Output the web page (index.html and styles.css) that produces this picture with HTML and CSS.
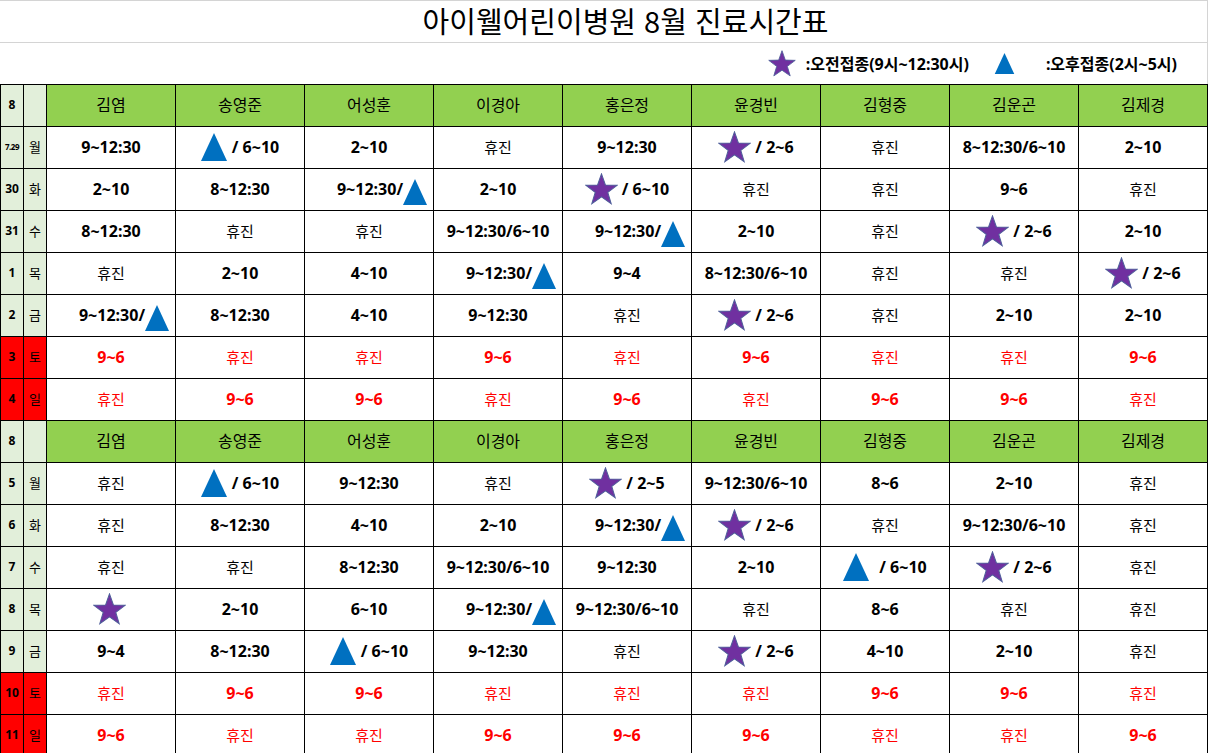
FILE: index.html
```html
<!DOCTYPE html>
<html lang="ko">
<head>
<meta charset="utf-8">
<title>아이웰어린이병원 8월 진료시간표</title>
<link rel="stylesheet" href="styles.css">
</head>
<body>
<svg class="defs" width="0" height="0" aria-hidden="true">
  <defs>
    <symbol id="star" viewBox="0 0 32 31">
      <polygon points="16,0.8 19.8,11.6 31.2,11.9 22.1,18.8 25.4,29.7 16,23.2 6.6,29.7 9.9,18.8 0.8,11.9 12.2,11.6" fill="#7030a0" stroke="#4f5f9a" stroke-width="1"/>
    </symbol>
    <symbol id="tri" viewBox="0 0 26 28">
      <polygon points="13,0 26,28 0,28" fill="#0070c0"/>
    </symbol>
  </defs>
</svg>
<div class="page">
  <div class="title">아이웰어린이병원 8월 진료시간표</div>
  <div class="legend">
    <svg class="lg-star"><use href="#star"/></svg>
    <span class="lg-text">:오전접종(9시~12:30시)</span>
    <svg class="lg-tri"><use href="#tri"/></svg>
    <span class="lg-text">:오후접종(2시~5시)</span>
  </div>
  <table class="sched">
    <colgroup>
      <col class="c-date"><col class="c-day">
      <col class="c-doc"><col class="c-doc"><col class="c-doc"><col class="c-doc"><col class="c-doc"><col class="c-doc"><col class="c-doc"><col class="c-doc"><col class="c-doc">
    </colgroup>
    <tbody>
      <tr class="head">
        <td class="date">8</td><td class="day"></td>
        <td>김염</td><td>송영준</td><td>어성훈</td><td>이경아</td><td>홍은정</td><td>윤경빈</td><td>김형중</td><td>김운곤</td><td>김제경</td>
      </tr>
      <tr>
        <td class="date tiny">7.29</td><td class="day">월</td>
        <td>9~12:30</td>
        <td><span class="ic"><svg class="tri"><use href="#tri"/></svg><span>/ 6~10</span></span></td>
        <td>2~10</td>
        <td class="off">휴진</td>
        <td>9~12:30</td>
        <td><span class="ic"><svg class="star"><use href="#star"/></svg><span>/ 2~6</span></span></td>
        <td class="off">휴진</td>
        <td>8~12:30/6~10</td>
        <td>2~10</td>
      </tr>
      <tr>
        <td class="date">30</td><td class="day">화</td>
        <td>2~10</td>
        <td>8~12:30</td>
        <td><span class="ic after"><span>9~12:30/</span><svg class="tri2"><use href="#tri"/></svg></span></td>
        <td>2~10</td>
        <td><span class="ic"><svg class="star"><use href="#star"/></svg><span>/ 6~10</span></span></td>
        <td class="off">휴진</td>
        <td class="off">휴진</td>
        <td>9~6</td>
        <td class="off">휴진</td>
      </tr>
      <tr>
        <td class="date">31</td><td class="day">수</td>
        <td>8~12:30</td>
        <td class="off">휴진</td>
        <td class="off">휴진</td>
        <td>9~12:30/6~10</td>
        <td><span class="ic after"><span>9~12:30/</span><svg class="tri2"><use href="#tri"/></svg></span></td>
        <td>2~10</td>
        <td class="off">휴진</td>
        <td><span class="ic"><svg class="star"><use href="#star"/></svg><span>/ 2~6</span></span></td>
        <td>2~10</td>
      </tr>
      <tr>
        <td class="date">1</td><td class="day">목</td>
        <td class="off">휴진</td>
        <td>2~10</td>
        <td>4~10</td>
        <td><span class="ic after"><span>9~12:30/</span><svg class="tri2"><use href="#tri"/></svg></span></td>
        <td>9~4</td>
        <td>8~12:30/6~10</td>
        <td class="off">휴진</td>
        <td class="off">휴진</td>
        <td><span class="ic"><svg class="star"><use href="#star"/></svg><span>/ 2~6</span></span></td>
      </tr>
      <tr>
        <td class="date">2</td><td class="day">금</td>
        <td><span class="ic after"><span>9~12:30/</span><svg class="tri2"><use href="#tri"/></svg></span></td>
        <td>8~12:30</td>
        <td>4~10</td>
        <td>9~12:30</td>
        <td class="off">휴진</td>
        <td><span class="ic"><svg class="star"><use href="#star"/></svg><span>/ 2~6</span></span></td>
        <td class="off">휴진</td>
        <td>2~10</td>
        <td>2~10</td>
      </tr>
      <tr class="we">
        <td class="date">3</td><td class="day">토</td>
        <td>9~6</td><td class="off">휴진</td><td class="off">휴진</td><td>9~6</td><td class="off">휴진</td><td>9~6</td><td class="off">휴진</td><td class="off">휴진</td><td>9~6</td>
      </tr>
      <tr class="we">
        <td class="date">4</td><td class="day">일</td>
        <td class="off">휴진</td><td>9~6</td><td>9~6</td><td class="off">휴진</td><td>9~6</td><td class="off">휴진</td><td>9~6</td><td>9~6</td><td class="off">휴진</td>
      </tr>
      <tr class="head">
        <td class="date">8</td><td class="day"></td>
        <td>김염</td><td>송영준</td><td>어성훈</td><td>이경아</td><td>홍은정</td><td>윤경빈</td><td>김형중</td><td>김운곤</td><td>김제경</td>
      </tr>
      <tr>
        <td class="date">5</td><td class="day">월</td>
        <td class="off">휴진</td>
        <td><span class="ic"><svg class="tri"><use href="#tri"/></svg><span>/ 6~10</span></span></td>
        <td>9~12:30</td>
        <td class="off">휴진</td>
        <td><span class="ic"><svg class="star"><use href="#star"/></svg><span>/ 2~5</span></span></td>
        <td>9~12:30/6~10</td>
        <td>8~6</td>
        <td>2~10</td>
        <td class="off">휴진</td>
      </tr>
      <tr>
        <td class="date">6</td><td class="day">화</td>
        <td class="off">휴진</td>
        <td>8~12:30</td>
        <td>4~10</td>
        <td>2~10</td>
        <td><span class="ic after"><span>9~12:30/</span><svg class="tri2"><use href="#tri"/></svg></span></td>
        <td><span class="ic"><svg class="star"><use href="#star"/></svg><span>/ 2~6</span></span></td>
        <td class="off">휴진</td>
        <td>9~12:30/6~10</td>
        <td class="off">휴진</td>
      </tr>
      <tr>
        <td class="date">7</td><td class="day">수</td>
        <td class="off">휴진</td>
        <td class="off">휴진</td>
        <td>8~12:30</td>
        <td>9~12:30/6~10</td>
        <td>9~12:30</td>
        <td>2~10</td>
        <td><span class="ic wide"><svg class="tri"><use href="#tri"/></svg><span>/ 6~10</span></span></td>
        <td><span class="ic"><svg class="star"><use href="#star"/></svg><span>/ 2~6</span></span></td>
        <td class="off">휴진</td>
      </tr>
      <tr>
        <td class="date">8</td><td class="day">목</td>
        <td><span class="ic"><svg class="star"><use href="#star"/></svg></span></td>
        <td>2~10</td>
        <td>6~10</td>
        <td><span class="ic after"><span>9~12:30/</span><svg class="tri2"><use href="#tri"/></svg></span></td>
        <td>9~12:30/6~10</td>
        <td class="off">휴진</td>
        <td>8~6</td>
        <td class="off">휴진</td>
        <td class="off">휴진</td>
      </tr>
      <tr>
        <td class="date">9</td><td class="day">금</td>
        <td>9~4</td>
        <td>8~12:30</td>
        <td><span class="ic"><svg class="tri"><use href="#tri"/></svg><span>/ 6~10</span></span></td>
        <td>9~12:30</td>
        <td class="off">휴진</td>
        <td><span class="ic"><svg class="star"><use href="#star"/></svg><span>/ 2~6</span></span></td>
        <td>4~10</td>
        <td>2~10</td>
        <td class="off">휴진</td>
      </tr>
      <tr class="we">
        <td class="date">10</td><td class="day">토</td>
        <td class="off">휴진</td><td>9~6</td><td>9~6</td><td class="off">휴진</td><td class="off">휴진</td><td class="off">휴진</td><td>9~6</td><td>9~6</td><td class="off">휴진</td>
      </tr>
      <tr class="we">
        <td class="date">11</td><td class="day">일</td>
        <td>9~6</td><td class="off">휴진</td><td class="off">휴진</td><td>9~6</td><td>9~6</td><td>9~6</td><td class="off">휴진</td><td class="off">휴진</td><td>9~6</td>
      </tr>
    </tbody>
  </table>
</div>
</body>
</html>
```

FILE: styles.css
```css
html, body {
  margin: 0;
  padding: 0;
  background: #ffffff;
}

body {
  font-family: "Noto Sans", "Noto Sans CJK KR", sans-serif;
  color: #000000;
}

.defs {
  position: absolute;
  width: 0;
  height: 0;
  overflow: hidden;
}

.page {
  width: 1208px;
}

.title {
  height: 43px;
  box-sizing: border-box;
  border-top: 1px solid #d4d4d4;
  border-bottom: 1px solid #d4d4d4;
  border-right: 1px solid #d4d4d4;
  display: flex;
  align-items: center;
  justify-content: center;
  padding: 0 0 2px 44px;
  font-family: "Noto Sans CJK KR", sans-serif;
  font-size: 29px;
  line-height: 1;
}

.legend {
  height: 41px;
  border-right: 1px solid #d4d4d4;
  display: flex;
  align-items: center;
  justify-content: flex-end;
  padding-right: 30px;
  font-size: 16px;
  font-weight: bold;
  line-height: 1;
}

.lg-star {
  width: 30px;
  height: 27px;
  margin-right: 9px;
}

.lg-tri {
  width: 21px;
  height: 21px;
  margin-left: 25px;
  margin-right: 31px;
}

.sched {
  border-collapse: collapse;
  table-layout: fixed;
  width: 1207px;
}

.c-date { width: 23px; }
.c-day { width: 23px; }
.c-doc { width: 129px; }

.sched td {
  border: 1px solid #000000;
  padding: 0 0 1px 0;
  box-sizing: border-box;
  height: 42px;
  text-align: center;
  vertical-align: middle;
  font-size: 16px;
  font-weight: bold;
  line-height: 1;
  white-space: nowrap;
  overflow: visible;
}

.sched td.off {
  font-weight: normal;
  font-size: 15px;
}

.sched td.date {
  background: #e2efda;
  font-size: 12px;
  font-weight: bold;
}

.sched td.date.tiny {
  font-size: 8px;
  letter-spacing: -0.5px;
}

.sched td.day {
  background: #e2efda;
  font-size: 13px;
  font-weight: normal;
}

.head td {
  background: #92d050;
  font-size: 16px;
  font-weight: normal;
}

.head td.date,
.head td.day {
  background: #e2efda;
}

.we td {
  color: #ff0000;
}

.we td.date,
.we td.day {
  background: #ff0000;
  color: #000000;
}

.ic {
  display: inline-flex;
  align-items: center;
  vertical-align: middle;
}

.ic.after {
  margin-left: 26px;
}

.ic .star {
  width: 33px;
  height: 32px;
  margin-right: 4px;
}

.ic .tri {
  width: 26px;
  height: 28px;
  margin-right: 5px;
}

.ic.wide .tri {
  margin-right: 10px;
}

.ic .tri2 {
  width: 24px;
  height: 28px;
  margin-top: 6px;
}
```
